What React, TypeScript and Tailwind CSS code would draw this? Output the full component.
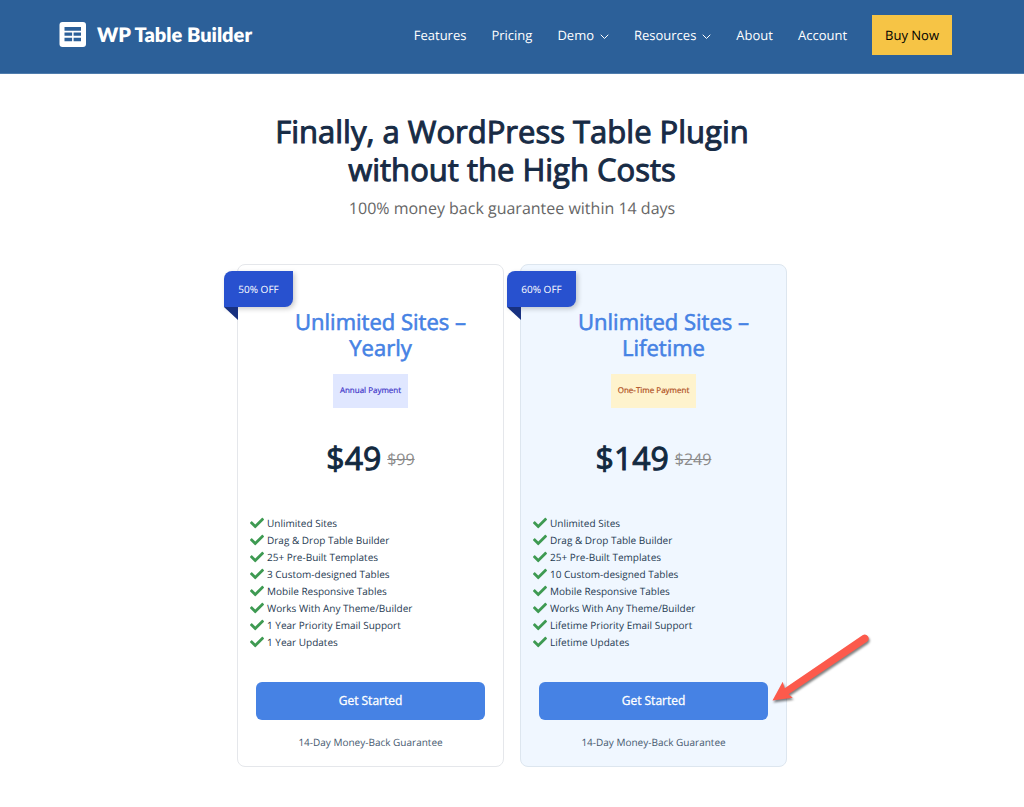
import { FaCheck } from "react-icons/fa";

type Plan = {
  name: string;
  term: string;
  discount: string;
  payment: string;
  paymentClass: string;
  cardClass: string;
  price: string;
  oldPrice: string;
  features: string[];
  highlighted?: boolean;
};

const navLinks = [
  { label: "Features" },
  { label: "Pricing" },
  { label: "Demo", hasMenu: true },
  { label: "Resources", hasMenu: true },
  { label: "About" },
  { label: "Account" },
];

const plans: Plan[] = [
  {
    name: "Unlimited Sites –",
    term: "Yearly",
    discount: "50% OFF",
    payment: "Annual Payment",
    paymentClass: "bg-[#e0e7ff] text-[#4338ca]",
    cardClass: "bg-white border-[#e5e7eb]",
    price: "$49",
    oldPrice: "$99",
    features: [
      "Unlimited Sites",
      "Drag & Drop Table Builder",
      "25+ Pre-Built Templates",
      "3 Custom-designed Tables",
      "Mobile Responsive Tables",
      "Works With Any Theme/Builder",
      "1 Year Priority Email Support",
      "1 Year Updates",
    ],
  },
  {
    name: "Unlimited Sites –",
    term: "Lifetime",
    discount: "60% OFF",
    payment: "One-Time Payment",
    paymentClass: "bg-[#fef3cd] text-[#b0501f]",
    cardClass: "bg-[#f0f7ff] border-[#dde6ef]",
    price: "$149",
    oldPrice: "$249",
    features: [
      "Unlimited Sites",
      "Drag & Drop Table Builder",
      "25+ Pre-Built Templates",
      "10 Custom-designed Tables",
      "Mobile Responsive Tables",
      "Works With Any Theme/Builder",
      "Lifetime Priority Email Support",
      "Lifetime Updates",
    ],
    highlighted: true,
  },
];

const Logo = () => (
  <a href="#" className="flex items-center gap-[11px] pb-px text-white">
    <svg width="27" height="25" viewBox="0 0 27 25" aria-hidden="true">
      <rect x="0.500" width="26.500" height="25" rx="3" fill="#fff" />
      <path
        fill="#2c6099"
        d="M5.500 5h16.500v3.700H5.500zM5.500 10.400h7.600v3.400H5.500zM14.600 10.400H22v3.400h-7.400zM5.500 15.800h7.600v3.400H5.500zM14.600 15.800H22v3.400h-7.400z"
      />
    </svg>
    <span className="font-['Lato'] text-[20px] font-extrabold leading-6">
      WP Table Builder
    </span>
  </a>
);

const Chevron = () => (
  <svg
    width="9"
    height="6"
    viewBox="0 0 9 6"
    fill="none"
    stroke="currentColor"
    className="mt-1"
    aria-hidden="true"
  >
    <path d="M1 1l3.500 3.500L8 1" strokeLinecap="round" />
  </svg>
);

const Header = () => (
  <header className="flex items-center justify-between bg-[#2c6099] border-b border-[#4f7dad] pt-[15px] pb-[18px] pl-[59px] pr-[72px]">
    <Logo />
    <nav className="flex items-center gap-[25px] text-[13px] leading-5 text-white">
      {navLinks.map((link) => (
        <a key={link.label} href="#" className="flex items-center gap-[6px]">
          {link.label}
          {link.hasMenu && <Chevron />}
        </a>
      ))}
      <a href="#" className="bg-[#f6c445] px-[13px] py-[10px] text-black">
        Buy Now
      </a>
    </nav>
  </header>
);

const Ribbon = ({ text }: { text: string }) => (
  <div className="absolute top-[6px] -left-[14px]">
    <div className="flex h-9 w-[69px] items-center justify-center rounded-tl-lg rounded-br-lg bg-[#2851cf] text-[10px] text-white shadow-[2px_2px_5px_rgba(0,0,0,0.2)]">
      {text}
    </div>
    <svg width="14" height="13" viewBox="0 0 14 13" className="block">
      <path d="M0 0h14v13z" fill="#183180" />
    </svg>
  </div>
);

const Arrow = () => (
  <svg
    width="108"
    height="80"
    viewBox="0 0 108 80"
    className="pointer-events-none absolute bottom-[57px] left-[249px]"
    aria-hidden="true"
  >
    <path
      d="M2.500 71.500L12.700 52.700L14.700 59.200L92.500 6.200A4 4 0 0 1 97 12.800L18.500 65.200L22.700 68.700Z"
      fill="#fc5a4c"
      className="drop-shadow-[1px_2px_1px_rgba(0,0,0,0.5)]"
    />
  </svg>
);

const PlanCard = ({ plan }: { plan: Plan }) => (
  <section
    className={`relative flex flex-1 flex-col items-center rounded-lg border px-3 pt-11 pb-4 ${plan.cardClass}`}
  >
    <Ribbon text={plan.discount} />
    <h2 className="pl-5 text-center text-[22px] leading-[26px] text-[#4682e4] [-webkit-text-stroke:0.6px_#4682e4]">
      {plan.name}
      <br />
      {plan.term}
    </h2>
    <p
      className={`mt-[13px] px-[7px] py-[11px] text-[8px] leading-3 [-webkit-text-stroke:0.2px_currentColor] ${plan.paymentClass}`}
    >
      {plan.payment}
    </p>
    <p className="mt-7 flex items-center gap-[6px] leading-[46px] text-[#12293f]">
      <span className="text-[32px] [-webkit-text-stroke:1px_#12293f]">
        {plan.price}
      </span>
      <del className="text-[16px] text-[#8a8a8a]">{plan.oldPrice}</del>
    </p>
    <ul className="mt-[33px] w-full text-[10px] leading-[17px] text-[#1f3a52]">
      {plan.features.map((feature) => (
        <li key={feature} className="flex items-center gap-[3px]">
          <FaCheck className="mb-px text-[#3e9a52]" size={14} />
          {feature}
        </li>
      ))}
    </ul>
    <div className="mt-[31px] w-full px-[6px]">
      <button className="h-[38px] w-full rounded-md bg-[#4682e4] text-[12px] text-white [-webkit-text-stroke:0.3px_#fff]">
        Get Started
      </button>
    </div>
    <p className="mt-[14px] text-[10px] leading-4 text-[#475a70]">
      14-Day Money-Back Guarantee
    </p>
    {plan.highlighted && <Arrow />}
  </section>
);

export default function App() {
  return (
    <div className="min-h-screen bg-white font-['Open_Sans',sans-serif] [text-rendering:geometricPrecision]">
      <Header />
      <main className="flex flex-col items-center pt-[39px] pb-10">
        <h1 className="text-center text-[31px] leading-[38px] text-[#172b45] [-webkit-text-stroke:1px_#172b45]">
          Finally, a WordPress Table Plugin
          <br />
          without the High Costs
        </h1>
        <p className="mt-[7px] text-[16px] leading-6 text-[#666]">
          100% money back guarantee within 14 days
        </p>
        <div className="mt-11 flex w-full max-w-[550px] gap-4">
          {plans.map((plan) => (
            <PlanCard key={plan.term} plan={plan} />
          ))}
        </div>
      </main>
    </div>
  );
}
